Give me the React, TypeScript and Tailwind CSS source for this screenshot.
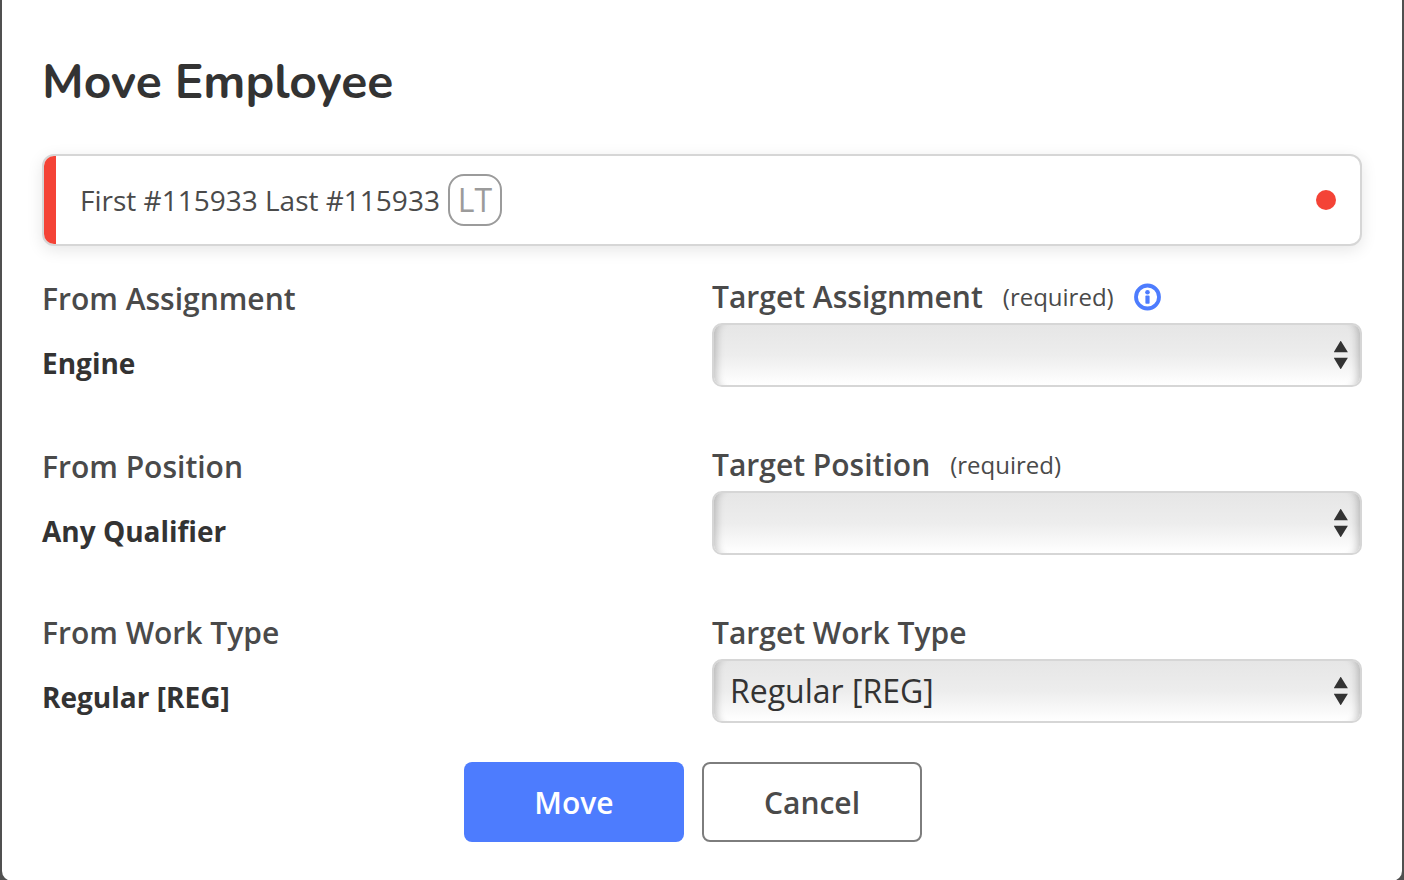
import { ReactNode, useState } from "react";

const workTypes = ["Regular [REG]"];

function InfoIcon() {
  return (
    <svg viewBox="0 0 28 28" className="size-7" aria-hidden="true">
      <circle cx="13.5" cy="14" r="11.5" fill="none" stroke="#4d7cfe" strokeWidth="3.8" />
      <circle cx="13.5" cy="9.2" r="2.3" fill="#4d7cfe" />
      <rect x="11.4" y="12.6" width="4.2" height="8.2" rx="0.8" fill="#4d7cfe" />
    </svg>
  );
}

function SortArrows() {
  return (
    <svg
      viewBox="0 0 14 28"
      className="pointer-events-none absolute top-1/2 right-3.5 h-7 w-3.5 -translate-y-1/2"
      aria-hidden="true"
    >
      <path d="M6.7 -0.4 L13.9 11.2 H-0.3 Z M-0.3 16.8 H13.9 L6.7 28.4 Z" fill="#333" />
    </svg>
  );
}

type FieldProps = {
  id: string;
  fromLabel: string;
  fromValue: string;
  label: string;
  required?: boolean;
  info?: ReactNode;
  options: string[];
};

function MoveField({ id, fromLabel, fromValue, label, required, info, options }: FieldProps) {
  const [value, setValue] = useState(options[0]);
  return (
    <div className="grid grid-cols-2 gap-5">
      <dl className={required ? "pt-0.5" : ""}>
        <dt className="text-[30px] leading-10 font-semibold text-[#4a4a4a]">{fromLabel}</dt>
        <dd className="pt-6 text-[28px] leading-10 font-bold text-[#333]">{fromValue}</dd>
      </dl>
      <div>
        <div className="flex h-[46px] items-start gap-5">
          <label htmlFor={id} className="flex items-center gap-5 text-[30px] leading-10 font-semibold text-[#4a4a4a]">
            {label}
            {required && <span className="text-2xl leading-10 font-normal">(required)</span>}
          </label>
          {info}
        </div>
        <div className="relative">
          <select
            id={id}
            value={value}
            onChange={(e) => setValue(e.target.value)}
            className="block h-16 w-full appearance-none rounded-[10px] border-2 border-[#d6d6d6] bg-linear-to-b from-[#e6e6e6] via-[#ededed] via-50% to-white px-4 pr-12 text-[32px] text-[#333] shadow-[inset_11px_0_8px_-9px_rgba(0,0,0,0.24),inset_-11px_0_8px_-9px_rgba(0,0,0,0.24)]"
          >
            {options.map((option) => (
              <option key={option} value={option}>
                {option}
              </option>
            ))}
          </select>
          <SortArrows />
        </div>
      </div>
    </div>
  );
}

export default function App() {
  return (
    <div className="min-h-screen bg-[#505050] px-0.5 font-['Open_Sans','Noto_Sans',sans-serif]">
      <main className="rounded-b-[10px] bg-white px-10 pt-12 pb-[39px]">
        <h1 className="font-['Nunito','Lato',sans-serif] text-5xl leading-[68px] font-bold text-[#333]">
          Move Employee
        </h1>

        <section className="mt-[38px] flex h-[92px] items-center overflow-hidden rounded-[12px] border-2 border-[#d6d6d6] bg-white pr-6 shadow-[0_4px_16px_rgba(0,0,0,0.1)]">
          <span className="h-full w-3 bg-[#f44336]" />
          <p className="ml-6 text-[28px] text-[#4a4a4a]">First #115933 Last #115933</p>
          <span className="ml-2 flex h-[52px] w-[54px] items-center justify-center rounded-2xl border-2 border-[#9b9b9b] text-[32px] font-medium text-[#9b9b9b]">
            LT
          </span>
          <span className="ml-auto size-5 rounded-full bg-[#f44336]" />
        </section>

        <form onSubmit={(e) => e.preventDefault()}>
          <div className="mt-[31px] flex flex-col gap-[58px]">
            <MoveField
              id="target-assignment"
              fromLabel="From Assignment"
              fromValue="Engine"
              label="Target Assignment"
              required
              info={
                <button type="button" aria-label="About target assignment" className="flex h-10 items-center">
                  <InfoIcon />
                </button>
              }
              options={[""]}
            />
            <MoveField
              id="target-position"
              fromLabel="From Position"
              fromValue="Any Qualifier"
              label="Target Position"
              required
              options={[""]}
            />
            <MoveField
              id="target-work-type"
              fromLabel="From Work Type"
              fromValue="Regular [REG]"
              label="Target Work Type"
              options={workTypes}
            />
          </div>

          <div className="mt-[39px] flex justify-center gap-[18px] pr-[18px]">
            <button type="submit" className="h-20 w-[220px] rounded-lg bg-[#4d7cfe] text-[30px] font-semibold text-white">
              Move
            </button>
            <button
              type="button"
              className="h-20 w-[220px] rounded-lg border-2 border-[#7d7d7d] bg-white text-[30px] font-semibold text-[#4a4a4a]"
            >
              Cancel
            </button>
          </div>
        </form>
      </main>
    </div>
  );
}
